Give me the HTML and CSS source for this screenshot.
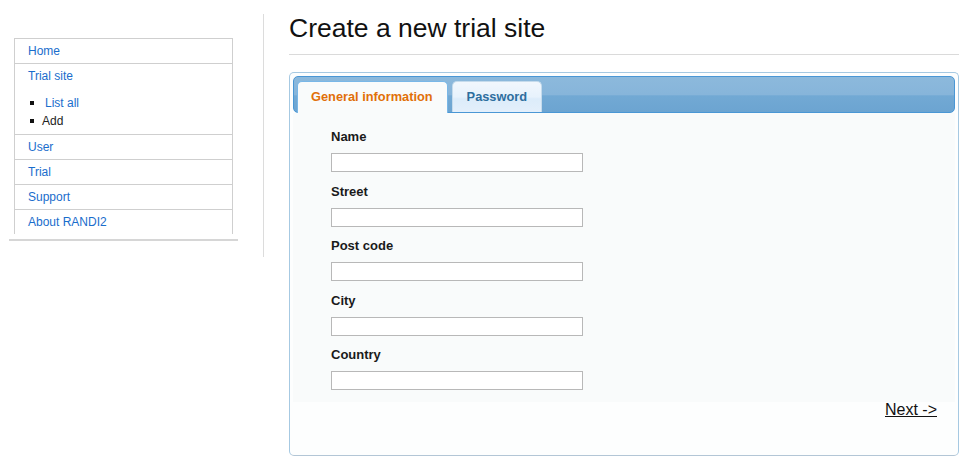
FILE: index.html
```html
<!DOCTYPE html>
<html>
<head>
<meta charset="utf-8">
<link rel="stylesheet" href="styles.css">
</head>
<body>
<div class="page">
  <div class="sidebar">
    <ul class="menu">
      <li class="menu-item"><a href="#">Home</a></li>
      <li class="menu-item"><a href="#">Trial site</a>
        <ul class="submenu">
          <li><a href="#" class="sub-link">List all</a></li>
          <li class="current">Add</li>
        </ul>
      </li>
      <li class="menu-item"><a href="#">User</a></li>
      <li class="menu-item"><a href="#">Trial</a></li>
      <li class="menu-item"><a href="#">Support</a></li>
      <li class="menu-item"><a href="#">About RANDI2</a></li>
    </ul>
    <div class="sidebar-rule"></div>
  </div>
  <div class="divider"></div>
  <div class="main">
    <h1 class="title">Create a new trial site</h1>
    <div class="panel">
      <div class="tabbar">
        <div class="tab tab-active">General information</div>
        <div class="tab tab-inactive">Password</div>
      </div>
      <div class="form">
        <div class="field"><label class="label">Name</label><input class="input" type="text"></div>
        <div class="field"><label class="label">Street</label><input class="input" type="text"></div>
        <div class="field"><label class="label">Post code</label><input class="input" type="text"></div>
        <div class="field"><label class="label">City</label><input class="input" type="text"></div>
        <div class="field last"><label class="label">Country</label><input class="input" type="text"></div>
      </div>
      <div class="actions"><a href="#" class="next">Next -&gt;</a></div>
    </div>
  </div>
</div>
</body>
</html>
```

FILE: styles.css
```css
* { box-sizing: border-box; }
html, body { margin: 0; padding: 0; background: #fff; }
body { font-family: "Liberation Sans", Arial, sans-serif; color: #222; }

.page {
  display: flex;
  align-items: flex-start;
  padding: 14px 8px 0 9px;
}

/* Sidebar */
.sidebar {
  width: 229px;
  flex: none;
  padding-top: 24px;
}
.menu {
  list-style: none;
  margin: 0 5px;
  padding: 0;
  border-left: 1px solid #cfcfcf;
  border-right: 1px solid #cfcfcf;
}
.menu-item {
  border-top: 1px solid #cfcfcf;
  padding-left: 13px;
  font-size: 12px;
  line-height: 24px;
}
.menu a { color: #1a6dcc; text-decoration: none; }
.submenu {
  list-style: none;
  margin: 6px 0 4px 2px;
  padding: 0;
  line-height: 18px;
}
.submenu li { display: flex; align-items: center; }
.submenu li::before {
  content: "";
  width: 4px;
  height: 4px;
  background: #111;
  margin-right: 8px;
  flex: none;
}
.sub-link { padding-left: 3px; }
.current { color: #222; }
.sidebar-rule {
  margin-top: 5px;
  border-top: 2px solid #d6d6d6;
}

.divider {
  flex: none;
  width: 1px;
  height: 243px;
  margin-left: 25px;
  background: #dcdcdc;
}

/* Main */
.main {
  flex: none;
  width: 670px;
  margin-left: 25px;
}
.title {
  margin: 0;
  font-weight: normal;
  font-size: 26.5px;
  line-height: 28px;
  color: #111;
  padding-bottom: 12px;
  border-bottom: 1px solid #dadada;
}

.panel {
  margin-top: 17px;
  border: 1px solid #a6c9e2;
  border-bottom-color: #b3c6d6;
  border-radius: 5px;
  background: #fdfefe;
  padding: 3px 3px 37px;
}
.tabbar {
  display: flex;
  gap: 4px;
  height: 37px;
  padding: 4px 3px 0;
  border: 1px solid #4a97d5;
  border-radius: 5px;
  background: linear-gradient(to bottom, #8cb9dc 0%, #87b5da 50%, #72a9d4 54%, #6ca4d1 100%);
}
.tab {
  font-size: 12.8px;
  font-weight: bold;
  line-height: 30px;
  padding: 0 14px 0 13px;
  border: 1px solid #c5dbec;
  border-bottom: none;
  border-radius: 5px 5px 0 0;
}
.tab-active {
  height: 32px;
  color: #e17009;
  background: #f9fbfb;
  border-color: #79b7e7;
}
.tab-inactive {
  height: 31px;
  color: #2e6e9e;
  padding: 0 14px;
  background: linear-gradient(to bottom, #f1f7fd 0%, #e7f2fc 50%, #dcecfa 56%, #e3effb 100%);
}

.form {
  background: #f9fbfb;
  padding: 16px 0 12px 38px;
}
.field {
  display: flex;
  flex-direction: column;
  align-items: flex-start;
  margin-bottom: 11.5px;
}
.field.last { margin-bottom: 0; }
.label {
  font-size: 13px;
  font-weight: bold;
  line-height: 16px;
  color: #1a1a1a;
  margin-bottom: 8px;
}
.input {
  width: 252px;
  height: 19px;
  margin: 0;
  padding: 0 3px;
  border: 1px solid #b8b8b8;
  background: #fff;
  font-family: "Liberation Sans", Arial, sans-serif;
  font-size: 12px;
}

.actions {
  display: flex;
  justify-content: flex-end;
  padding-right: 18px;
  line-height: 16px;
}
.next {
  font-size: 16px;
  color: #111;
  text-decoration: underline;
}
```
